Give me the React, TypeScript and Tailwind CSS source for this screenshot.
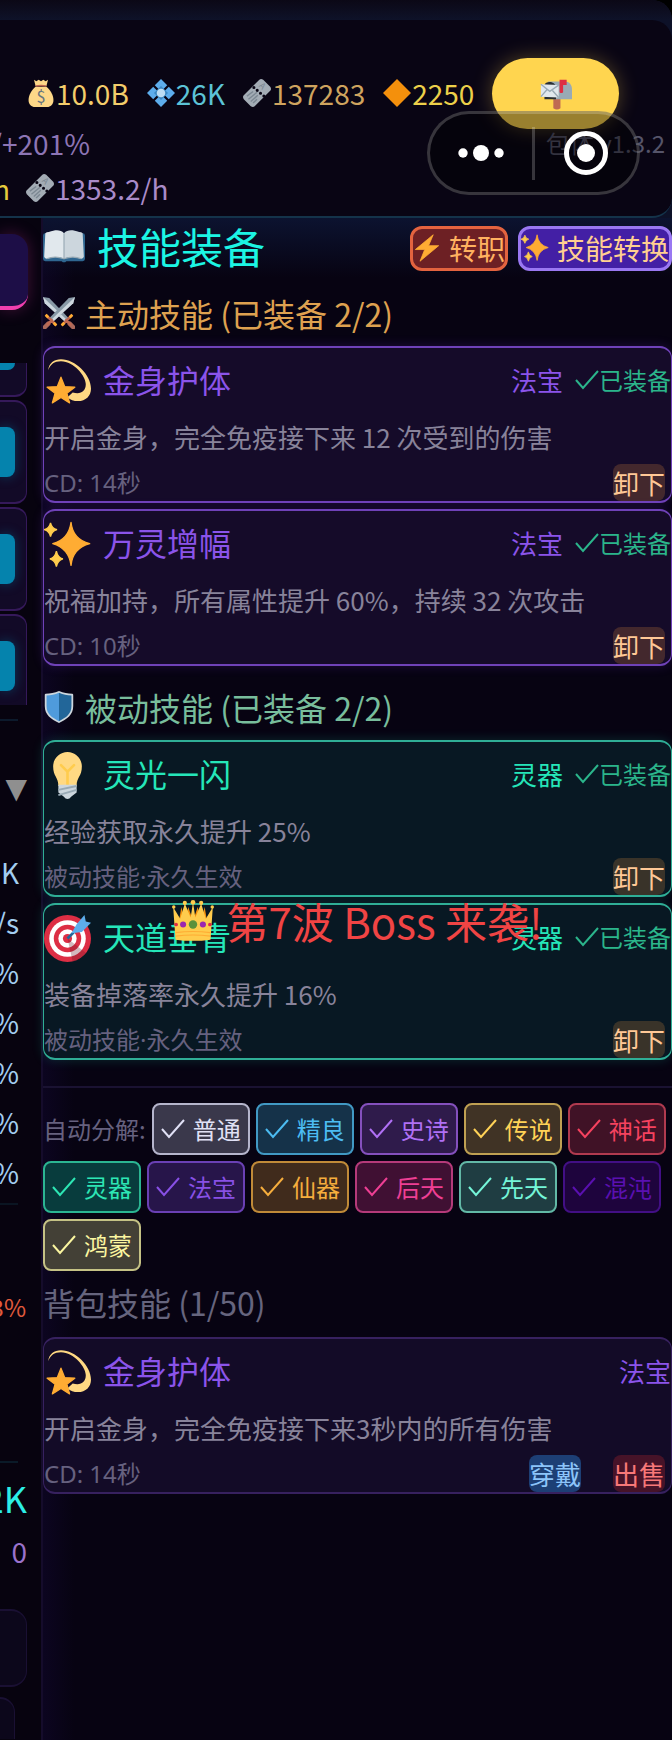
import type { ReactNode } from "react";
import clsx from "clsx";

type IconProps = { className?: string };

const Svg = ({ className, children }: { className?: string; children: ReactNode }) => (
  <svg viewBox="0 0 36 36" className={clsx("shrink-0", className)} aria-hidden="true">
    {children}
  </svg>
);

/* Emoji icons */
const MoneyBag = ({ className }: IconProps) => (
  <Svg className={className}>
    <path d="M11 10c-5 4-9 11-9 17 0 6 4 9 8 9h16c4 0 8-3 8-9 0-6-4-13-9-17z" fill="#FDD888" />
    <path d="M9 1l3 2 3-2 3 2 3-2 3 2 3-2-2 8H11z" fill="#FDD888" />
    <path d="M11 8c4-1 10-1 14 0v2c-4-1-10-1-14 0z" fill="#BF6952" />
    <text x="18" y="31" textAnchor="middle" fontSize="21" fill="#67757F">$</text>
  </Svg>
);

const BlueGem = ({ className }: IconProps) => (
  <Svg className={className}>
    <path d="M18 0l8 8-8 8-8-8zM18 20l8 8-8 8-8-8zM8 10l8 8-8 8-8-8zM28 10l8 8-8 8-8-8z" fill="#5DADEC" />
    <path d="M18 9l9 9-9 9-9-9z" fill="#3B88C3" />
    <circle cx="18" cy="18" r="5.500" fill="#BDDDF4" />
  </Svg>
);

const Ticket = ({ className }: IconProps) => (
  <Svg className={className}>
    <path d="M21 1q2-2 5 0l9 9q2 3 0 5L15 35q-2 2-5 0l-9-9q-2-3 0-5z" fill="#A3ACB5" />
    <path d="M14 11l13 11" stroke="#090514" strokeWidth="4" strokeLinecap="round" strokeDasharray="0 5.600" />
    <path d="M5 22l8-6M7 26l11-9M10 29l9-8M13 31l5-5" stroke="#7B8792" strokeWidth="1.800" />
    <text x="25" y="13" textAnchor="middle" fontSize="11" fill="#7B8792" transform="rotate(45 25 9)">A</text>
  </Svg>
);

const OrangeDiamond = ({ className }: IconProps) => (
  <Svg className={className}>
    <path d="M18 0l18 18-18 18L0 18z" fill="#F4900C" />
  </Svg>
);

const Mailbox = ({ className }: IconProps) => (
  <Svg className={className}>
    <path d="M15 22h8v12q-4 3-8 0z" fill="#BF6952" />
    <path d="M9 4h19c5 0 8 4 8 9v11H14z" fill="#99AAB5" />
    <path d="M5 8c1-5 12-5 13 2v14H5z" fill="#292F33" />
    <path d="M1 7l20 1v14L1 21z" fill="#E1E8ED" />
    <path d="M1 7l10 8 10-7M1 21l7-8M21 22l-7-8" fill="none" stroke="#99AAB5" strokeWidth="1.500" />
    <path d="M22 2h8v6h-4v8q-2 2-4 0z" fill="#DD2E44" />
  </Svg>
);

const OpenBook = ({ className }: IconProps) => (
  <Svg className={className}>
    <path d="M0 9q0-2 2-2h32q2 0 2 2v20q0 2-2 2H20q-2 2-4 0H2q-2 0-2-2z" fill="#2F6690" />
    <path d="M2 7q1-1 3-1c6-2 10-2 13 1v22c-4-2-9-2-14 0-2 0-3-1-3-2z" fill="#E1E8ED" />
    <path d="M34 7q-1-1-3-1c-6-2-10-2-13 1v22c4-2 9-2 14 0 2 0 3-1 3-2z" fill="#CCD6DD" />
    <path d="M3 29c5-2 10-2 15 0 5-2 10-2 15 0M18 7v22" fill="none" stroke="#99AAB5" />
  </Svg>
);

const Bolt = ({ className }: IconProps) => (
  <Svg className={className}>
    <path d="M26 1L3 20h12L9 35l24-20H20z" fill="#FFAC33" stroke="#FFAC33" strokeLinejoin="round" />
  </Svg>
);

const Sparkles = ({ className }: IconProps) => (
  <Svg className={className}>
    <path d="M20.700 1Q22 14 35 17.400Q22 21 20.700 34Q19 21 6.700 17.400Q19 14 20.700 1z" fill="#FFAC33" stroke="#FFAC33" strokeLinejoin="round" />
    <path d="M5 1.500Q6 6 10 6.600Q6 7.500 5 12Q4 7.500 0 6.600Q4 6 5 1.500z" fill="#FFCC4D" stroke="#FFCC4D" />
    <path d="M9.500 23Q10.500 28 14.500 29Q10.500 30 9.500 35Q8.500 30 4.500 29Q8.500 28 9.500 23z" fill="#FFCC4D" stroke="#FFCC4D" />
  </Svg>
);

const Dizzy = ({ className }: IconProps) => (
  <Svg className={className}>
    <path d="M3.300 9.400C3.500 4 8 1 13 1 24 1 36 13 36 23.500 36 29 32 33 26 33 23 33 20 32 18 30L22 26.500C28 28 32 26 32 20 32 14 23 2.500 13 2.500 8 2.500 4.500 5 3.300 9.400z" fill="#FFD983" />
    <path d="M13 14.700L15.800 21.900 23.600 22.400 17.500 27 19.600 34.400 13 30.300 6.400 34.400 8.500 27 2.400 22.400 10.200 21.900z" fill="#FFAC33" stroke="#FFAC33" strokeLinejoin="round" />
  </Svg>
);

const Swords = ({ className }: IconProps) => (
  <Svg className={className}>
    <path d="M0 0l7 1 22 23-4 4L2 7z" fill="#8899A6" />
    <path d="M0 0l27 26-2 2L2 7z" fill="#CCD6DD" />
    <path d="M36 0l-7 1L7 24l4 4L34 7z" fill="#8899A6" />
    <path d="M36 0L9 26l2 2L34 7z" fill="#CCD6DD" />
    <path d="M30 30l4 4M6 30l-4 4" stroke="#AA695B" strokeWidth="5" strokeLinecap="round" />
    <path d="M32 21L22 31M4 21l10 10M26 26l5 5M10 26l-5 5" stroke="#BF6952" strokeWidth="3" strokeLinecap="round" />
    <path d="M33 20l-3 3M24 29l-3 3M3 20l3 3M12 29l3 3" stroke="#FFAC33" strokeWidth="3" />
  </Svg>
);

const Shield = ({ className }: IconProps) => (
  <Svg className={className}>
    <path d="M18 0c5 2 10 3 15 3 1 0 1 1 1 2v12c0 10-7 15-16 19C9 32 2 27 2 17V5c0-1 0-2 1-2 5 0 10-1 15-3z" fill="#CCD6DD" />
    <path d="M18 2C13 4 9 5 4 5v12c0 9 6 13 14 17z" fill="#4F9BDC" />
    <path d="M18 2c5 2 9 3 14 3v12c0 9-6 13-14 17z" fill="#269" />
  </Svg>
);

const Bulb = ({ className }: IconProps) => (
  <Svg className={className}>
    <path d="M29 11c0 8-4 8-4 15H11c0-7-4-7-4-15C7 5 12 0 18 0s11 5 11 11z" fill="#FFD983" />
    <path d="M13 10l5 5 5-5M18 15v11" fill="none" stroke="#FFCC4D" strokeWidth="2" strokeLinecap="round" />
    <path d="M11 25h14v6l-4 3q-3 4-6 0l-4-3z" fill="#CCD6DD" />
    <path d="M11 29l14-3M11 33l14-4" stroke="#99AAB5" strokeWidth="1.500" />
  </Svg>
);

const Target = ({ className }: IconProps) => (
  <Svg className={className}>
    <circle cx="18" cy="18" r="18" fill="#DD2E44" />
    <circle cx="18" cy="18" r="14" fill="#FFF" />
    <circle cx="18" cy="18" r="10.500" fill="#DD2E44" />
    <circle cx="18" cy="18" r="7" fill="#FFF" />
    <circle cx="18" cy="18" r="3.500" fill="#DD2E44" />
    <path d="M18 18l14 11q-4 5-10 7z" fill="#6B1B2A" opacity=".3" />
    <path d="M18 18L30 6" stroke="#269" strokeWidth="2" />
    <path d="M25 7l6-7 1 5 4 1-7 7-8 1z" fill="#5DADEC" />
  </Svg>
);

const Crown = ({ className }: IconProps) => (
  <Svg className={className}>
    <path d="M6 18l2-12 3 12 3-12 4 12 4-12 3 12 3-12 2 12z" fill="#F4900C" />
    <path d="M3 34L1 6l6 10 4-13 5 12 2-13 2 13 5-12 4 13 6-10-2 28q-15 2-30 0z" fill="#FFCC4D" />
    <circle cx="1.500" cy="6" r="1.500" fill="#FFCC4D" />
    <circle cx="11" cy="2.500" r="1.800" fill="#FFCC4D" />
    <circle cx="18" cy="2" r="2" fill="#FFCC4D" />
    <circle cx="25" cy="2.500" r="1.800" fill="#FFCC4D" />
    <circle cx="34.500" cy="6" r="1.500" fill="#FFCC4D" />
    <circle cx="18" cy="21" r="3.600" fill="#5C913B" />
    <circle cx="9.500" cy="21" r="2.600" fill="#9B26B0" />
    <circle cx="26.500" cy="21" r="2.600" fill="#9B26B0" />
    <circle cx="3.500" cy="21" r="1.600" fill="#DD2E44" />
    <circle cx="32.500" cy="21" r="1.600" fill="#DD2E44" />
    <path d="M3 28q15-2 30 0M3 31q15-2 30 0" fill="none" stroke="#FFAC33" />
  </Svg>
);

const Check = ({ className }: IconProps) => (
  <svg viewBox="0 0 24 24" className={clsx("shrink-0", className)} fill="none" stroke="currentColor" strokeWidth="2" aria-hidden="true">
    <path d="M1 12l7 8L23 3" />
  </svg>
);

const currencies = [
  { Icon: MoneyBag, value: "10.0B", color: "text-[#f3cd6b]" },
  { Icon: BlueGem, value: "26K", color: "text-[#5cc3d6]" },
  { Icon: Ticket, value: "137283", color: "text-[#cfa45f]" },
  { Icon: OrangeDiamond, value: "2250", color: "text-[#ecd04a]" },
];

const tones = {
  purple: {
    card: "border-[#6f42b8] bg-[#150b29] shadow-[0_0_12px_rgba(124,58,237,0.2)]",
    text: "text-[#8b54ea]",
  },
  green: {
    card: "border-[#2fae96] bg-[#081823] shadow-[0_0_12px_rgba(29,233,182,0.18)]",
    text: "text-[#25e6b9]",
  },
  plain: {
    card: "border-[#37215f] bg-[#130b27]",
    text: "text-[#8b54ea]",
  },
};

type Skill = {
  Icon: (props: IconProps) => ReactNode;
  name: string;
  grade: string;
  desc: string;
  note: string;
  tone: keyof typeof tones;
  equipped?: boolean;
};

const activeSkills: Skill[] = [
  { Icon: Dizzy, name: "金身护体", grade: "法宝", desc: "开启金身，完全免疫接下来 12 次受到的伤害", note: "CD: 14秒", tone: "purple", equipped: true },
  { Icon: Sparkles, name: "万灵增幅", grade: "法宝", desc: "祝福加持，所有属性提升 60%，持续 32 次攻击", note: "CD: 10秒", tone: "purple", equipped: true },
];

const passiveSkills: Skill[] = [
  { Icon: Bulb, name: "灵光一闪", grade: "灵器", desc: "经验获取永久提升 25%", note: "被动技能·永久生效", tone: "green", equipped: true },
  { Icon: Target, name: "天道垂青", grade: "灵器", desc: "装备掉落率永久提升 16%", note: "被动技能·永久生效", tone: "green", equipped: true },
];

const bagSkills: Skill[] = [
  { Icon: Dizzy, name: "金身护体", grade: "法宝", desc: "开启金身，完全免疫接下来3秒内的所有伤害", note: "CD: 14秒", tone: "plain" },
];

const qualities = [
  { label: "普通", style: "border-[#b5b5cc] bg-[#3a384b] text-[#e0e0f5]" },
  { label: "精良", style: "border-[#4199c4] bg-[#153249] text-[#4cbcf2]" },
  { label: "史诗", style: "border-[#8450bd] bg-[#2f1b4b] text-[#b070f5]" },
  { label: "传说", style: "border-[#bfa052] bg-[#403325] text-[#ffd257]" },
  { label: "神话", style: "border-[#b03a4f] bg-[#401226] text-[#f5425f]" },
  { label: "灵器", style: "border-[#2bb592] bg-[#083c3d] text-[#2de6b4]" },
  { label: "法宝", style: "border-[#6a40b5] bg-[#27154a] text-[#8850e5]" },
  { label: "仙器", style: "border-[#c08a38] bg-[#402b1c] text-[#f5ad3d]" },
  { label: "后天", style: "border-[#b53a7a] bg-[#401033] text-[#ee3f94]" },
  { label: "先天", style: "border-[#62b8a6] bg-[#1f3d42] text-[#75f5d8]" },
  { label: "混沌", style: "border-[#420f85] bg-[#1e043d] text-[#5a10b0]" },
  { label: "鸿蒙", style: "border-[#c5c285] bg-[#434036] text-[#fbf6a0]" },
];

const stats = ["52K", "1.2/s", "45%", "30%", "25%", "20%", "15%"];

const ActionButton = ({ className, children }: { className: string; children: ReactNode }) => (
  <button type="button" className={clsx("h-[37px] w-[52px] rounded-lg text-[26px] leading-[34px]", className)}>
    {children}
  </button>
);

const SkillCard = ({ skill }: { skill: Skill }) => {
  const { Icon } = skill;
  const tone = tones[skill.tone];
  return (
    <article className={clsx("rounded-xl border-x border-y-2", tone.card)}>
      <div className="flex h-[66px] items-center">
        <Icon className="h-[47px] w-[47px]" />
        <h3 className={clsx("ml-3 pb-1 text-[32px] leading-10", tone.text)}>{skill.name}</h3>
        <span className={clsx("ml-auto pb-0.5 text-[26px] leading-8", tone.text)}>{skill.grade}</span>
        {skill.equipped && (
          <span className="ml-3 flex items-center pb-0.5 text-2xl text-[#2bb58b]">
            <Check className="h-6 w-6" />
            已装备
          </span>
        )}
      </div>
      <p className="h-[50px] text-[26px] leading-[46px] whitespace-nowrap text-[#88839a]">{skill.desc}</p>
      <div className="flex h-[37px] items-center gap-8 pr-1.5">
        <span className="mr-auto font-['Noto_Sans','Noto_Sans_CJK_SC',sans-serif] text-2xl text-[#66617f]">{skill.note}</span>
        {skill.equipped ? (
          <ActionButton className="bg-[#ff9f43]/20 text-[#ffc896]">卸下</ActionButton>
        ) : (
          <>
            <ActionButton className="bg-[#1d3f75] text-[#8cc4fa]">穿戴</ActionButton>
            <ActionButton className="bg-[#461328] text-[#f87878]">出售</ActionButton>
          </>
        )}
      </div>
    </article>
  );
};

const TopBar = () => (
  <header className="relative border-b-2 border-[#14334a] bg-[#090514] rounded-r-[20px] pt-[38px] pb-3.5 text-[28px] leading-8 whitespace-nowrap">
    <div className="flex h-[71px] items-center gap-[18px] pl-[27px]">
      {currencies.map(({ Icon, value, color }) => (
        <span key={value} className={clsx("flex items-center gap-px pb-0.5", color)}>
          <Icon className="h-7 w-7" />
          {value}
        </span>
      ))}
      <button
        type="button"
        aria-label="邮件"
        className="flex h-full w-[127px] items-center justify-center rounded-full bg-[#ffd54f] shadow-[0_0_20px_rgba(255,213,79,0.3)]"
      >
        <Mailbox className="h-8 w-8" />
      </button>
    </div>
    <div className="flex h-7 items-center justify-between pr-[7px]">
      <span className="flex w-[90px] justify-end text-[#8d75b5]">/+201%</span>
      <span className="text-2xl text-[#555469]">包体 v1.3.2</span>
    </div>
    <div className="mt-[17px] flex h-7 items-center gap-4">
      <span className="flex w-2.5 justify-end text-[#e5cb3c]">5.2/h</span>
      <span className="flex items-center gap-px text-[#a98bc9]">
        <Ticket className="h-7 w-7" />
        1353.2/h
      </span>
    </div>
    {/* Host app capsule */}
    <div className="absolute top-[91px] right-8 flex h-[84px] w-[213px] items-center rounded-full border-3 border-white/20 bg-black/40">
      <button type="button" aria-label="更多" className="flex flex-1 justify-center">
        <svg viewBox="0 0 46 18" className="h-[18px] w-[46px]" fill="#fff">
          <circle cx="5" cy="9" r="4.700" />
          <circle cx="23" cy="9" r="8" />
          <circle cx="41" cy="9" r="4.700" />
        </svg>
      </button>
      <span className="h-[53px] w-[3px] bg-white/20" />
      <button type="button" aria-label="关闭" className="flex flex-1 justify-center">
        <svg viewBox="0 0 46 46" className="h-[46px] w-[46px]">
          <circle cx="23" cy="23" r="19.500" fill="none" stroke="#fff" strokeWidth="5" />
          <circle cx="23" cy="23" r="9" fill="#fff" />
        </svg>
      </button>
    </div>
  </header>
);

const SidePanel = () => (
  <aside className="w-[43px] shrink-0 overflow-hidden border-r-2 border-[#150c2b] bg-[#07030f] text-[28px] leading-8 whitespace-nowrap">
    <div className="mt-4 h-[76px] w-7 rounded-r-2xl border-b-4 border-[#f03fae] bg-[#1d0e47] shadow-[0_0_16px_rgba(240,63,174,0.25)]" />
    <div className="mt-[53px] h-[342px] overflow-hidden">
      <div className="h-[34px] w-[27px] rounded-br-xl border-r border-b-2 border-[#35195a] bg-[#120a27]">
        <div className="h-[7px] w-[15px] rounded-br-lg bg-[#0583ad]" />
      </div>
      {[0, 1, 2].map((i) => (
        <div key={i} className="mt-[3px] flex h-[104px] w-[27px] items-center rounded-r-xl border-y-2 border-r border-[#35195a] bg-[#120a27]">
          <div className="h-[50px] w-[15px] rounded-r-lg bg-[#0583ad] shadow-[0_0_12px_rgba(5,131,173,0.4)]" />
        </div>
      ))}
    </div>
    <div className="mt-3.5 h-0.5 w-[18px] bg-[#0c1a2c]" />
    <div className="mt-[52px] flex h-8 w-[27px] justify-end font-['DejaVu_Sans',sans-serif] text-[#8f8f8f]">▼</div>
    <div className="mt-[42px] w-[19px] text-[#a3cdf0]">
      {stats.map((stat) => (
        <div key={stat} className="flex h-[50px] items-center justify-end">{stat}</div>
      ))}
    </div>
    <div className="mt-1.5 h-0.5 w-[18px] bg-[#0a1522]" />
    <div className="mt-[86px] flex w-[26px] justify-end text-2xl leading-8 text-[#e05a3c]">13%</div>
    <div className="mt-[138px] h-0.5 w-[18px] bg-[#0a1a28]" />
    <div className="mt-3 flex h-11 w-[27px] items-center justify-end text-4xl text-[#2ceee6]">52K</div>
    <div className="mt-4 flex w-[27px] justify-end text-[#9a72cc]">0</div>
    <div className="mt-[42px] h-[78px] w-[27px] rounded-r-2xl border-y-2 border-r border-[#1a1033] bg-[#0c071b]" />
    <div className="mt-2.5 h-[42px] w-[15px] rounded-tr-2xl border-t-2 border-r border-[#1a1033] bg-[#0c071b]" />
  </aside>
);

const SectionTitle = ({ className, children }: { className: string; children: ReactNode }) => (
  <h2 className={clsx("flex h-[62px] items-center gap-2.5 pb-1 text-[32px]", className)}>{children}</h2>
);

const App = () => {
  return (
    <div className="flex min-h-screen flex-col overflow-hidden bg-[#070312] font-['Noto_Sans_CJK_SC',sans-serif]">
      <div className="bg-black">
        <div className="rounded-tr-[20px] bg-[#0d1128]">
          <div className="h-5 rounded-tr-[20px] bg-linear-to-b from-[#0b0816] to-[#0e1229]" />
          <TopBar />
        </div>
      </div>

      <div className="flex flex-1">
        <SidePanel />

        <main className="relative min-w-0 flex-1 bg-linear-to-r from-[#0c0520] to-[#070312] to-5%">
          <div className="flex h-[60px] items-center gap-2.5 bg-linear-to-b from-[#0c1330] to-transparent whitespace-nowrap">
            <h1 className="mr-auto flex items-center gap-3 pb-1 text-[42px] leading-[50px] text-[#1cf5e4]">
              <OpenBook className="h-[42px] w-[42px]" />
              技能装备
            </h1>
            <button type="button" className="flex h-[45px] items-center gap-2 rounded-xl border-3 border-[#e3633f] bg-[#6d2024] text-[28px] leading-8 text-[#ffb160]">
              <Bolt className="h-7 w-7" />
              转职
            </button>
            <button type="button" className="flex h-[45px] items-center gap-2 rounded-xl border-3 border-[#9a78f2] bg-[#431fa5] text-[28px] leading-8 text-[#ffcf90]">
              <Sparkles className="h-7 w-7" />
              技能转换
            </button>
          </div>

          {/* Equipped skills */}
          <SectionTitle className="mt-1.5 text-[#dea150]">
            <Swords className="h-8 w-8" />
            主动技能 (已装备 2/2)
          </SectionTitle>
          <div className="flex flex-col gap-1.5">
            {activeSkills.map((skill) => (
              <SkillCard key={skill.name} skill={skill} />
            ))}
          </div>

          <SectionTitle className="mt-3 text-[#78bd9c]">
            <Shield className="h-8 w-8" />
            被动技能 (已装备 2/2)
          </SectionTitle>
          <div className="flex flex-col gap-1.5">
            {passiveSkills.map((skill) => (
              <SkillCard key={skill.name} skill={skill} />
            ))}
          </div>

          {/* Auto salvage filters */}
          <fieldset className="mt-[26px] flex flex-wrap items-center gap-1.5 border-t-2 border-[#1a1232] pt-[15px] text-2xl">
            <span className="text-[#66617f]">自动分解:</span>
            {qualities.map(({ label, style }) => (
              <label key={label} className={clsx("relative flex h-[52px] items-center gap-2 rounded-lg border-2 px-[7px]", style)}>
                <input type="checkbox" defaultChecked className="peer sr-only" />
                <Check className="invisible h-6 w-6 peer-checked:visible" />
                {label}
              </label>
            ))}
          </fieldset>

          <SectionTitle className="mt-0.5 mb-0.5 text-[#66657e]">背包技能 (1/50)</SectionTitle>
          {bagSkills.map((skill) => (
            <SkillCard key={skill.name} skill={skill} />
          ))}

          {/* Boss alert */}
          <div role="alert" className="pointer-events-none absolute inset-x-0 top-[678px] flex items-center justify-center gap-3 text-[42px] leading-[50px] whitespace-nowrap text-[#f04444]">
            <Crown className="h-[42px] w-[42px]" />
            第7波 Boss 来袭!
          </div>
        </main>
      </div>
    </div>
  );
};

export default App;
